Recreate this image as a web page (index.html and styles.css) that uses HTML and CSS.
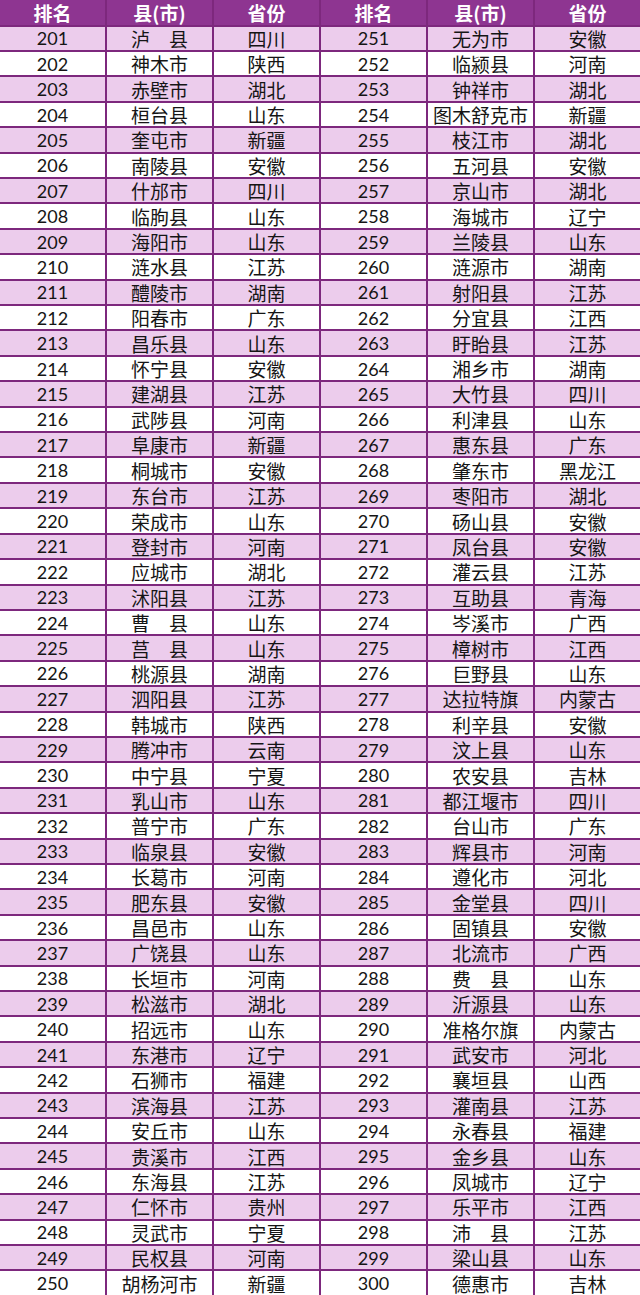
FILE: index.html
```html
<!DOCTYPE html>
<html lang="zh">
<head>
<meta charset="utf-8">
<link rel="stylesheet" href="styles.css">
</head>
<body>
<div class="table">
<div class="row head"><div class="c">排名</div><div class="c">县(市)</div><div class="c">省份</div><div class="c">排名</div><div class="c">县(市)</div><div class="c">省份</div></div>
<div class="row alt"><div class="c n">201</div><div class="c">泸　县</div><div class="c">四川</div><div class="c n">251</div><div class="c">无为市</div><div class="c">安徽</div></div>
<div class="row"><div class="c n">202</div><div class="c">神木市</div><div class="c">陕西</div><div class="c n">252</div><div class="c">临颍县</div><div class="c">河南</div></div>
<div class="row alt"><div class="c n">203</div><div class="c">赤壁市</div><div class="c">湖北</div><div class="c n">253</div><div class="c">钟祥市</div><div class="c">湖北</div></div>
<div class="row"><div class="c n">204</div><div class="c">桓台县</div><div class="c">山东</div><div class="c n">254</div><div class="c">图木舒克市</div><div class="c">新疆</div></div>
<div class="row alt"><div class="c n">205</div><div class="c">奎屯市</div><div class="c">新疆</div><div class="c n">255</div><div class="c">枝江市</div><div class="c">湖北</div></div>
<div class="row"><div class="c n">206</div><div class="c">南陵县</div><div class="c">安徽</div><div class="c n">256</div><div class="c">五河县</div><div class="c">安徽</div></div>
<div class="row alt"><div class="c n">207</div><div class="c">什邡市</div><div class="c">四川</div><div class="c n">257</div><div class="c">京山市</div><div class="c">湖北</div></div>
<div class="row"><div class="c n">208</div><div class="c">临朐县</div><div class="c">山东</div><div class="c n">258</div><div class="c">海城市</div><div class="c">辽宁</div></div>
<div class="row alt"><div class="c n">209</div><div class="c">海阳市</div><div class="c">山东</div><div class="c n">259</div><div class="c">兰陵县</div><div class="c">山东</div></div>
<div class="row"><div class="c n">210</div><div class="c">涟水县</div><div class="c">江苏</div><div class="c n">260</div><div class="c">涟源市</div><div class="c">湖南</div></div>
<div class="row alt"><div class="c n">211</div><div class="c">醴陵市</div><div class="c">湖南</div><div class="c n">261</div><div class="c">射阳县</div><div class="c">江苏</div></div>
<div class="row"><div class="c n">212</div><div class="c">阳春市</div><div class="c">广东</div><div class="c n">262</div><div class="c">分宜县</div><div class="c">江西</div></div>
<div class="row alt"><div class="c n">213</div><div class="c">昌乐县</div><div class="c">山东</div><div class="c n">263</div><div class="c">盱眙县</div><div class="c">江苏</div></div>
<div class="row"><div class="c n">214</div><div class="c">怀宁县</div><div class="c">安徽</div><div class="c n">264</div><div class="c">湘乡市</div><div class="c">湖南</div></div>
<div class="row alt"><div class="c n">215</div><div class="c">建湖县</div><div class="c">江苏</div><div class="c n">265</div><div class="c">大竹县</div><div class="c">四川</div></div>
<div class="row"><div class="c n">216</div><div class="c">武陟县</div><div class="c">河南</div><div class="c n">266</div><div class="c">利津县</div><div class="c">山东</div></div>
<div class="row alt"><div class="c n">217</div><div class="c">阜康市</div><div class="c">新疆</div><div class="c n">267</div><div class="c">惠东县</div><div class="c">广东</div></div>
<div class="row"><div class="c n">218</div><div class="c">桐城市</div><div class="c">安徽</div><div class="c n">268</div><div class="c">肇东市</div><div class="c">黑龙江</div></div>
<div class="row alt"><div class="c n">219</div><div class="c">东台市</div><div class="c">江苏</div><div class="c n">269</div><div class="c">枣阳市</div><div class="c">湖北</div></div>
<div class="row"><div class="c n">220</div><div class="c">荣成市</div><div class="c">山东</div><div class="c n">270</div><div class="c">砀山县</div><div class="c">安徽</div></div>
<div class="row alt"><div class="c n">221</div><div class="c">登封市</div><div class="c">河南</div><div class="c n">271</div><div class="c">凤台县</div><div class="c">安徽</div></div>
<div class="row"><div class="c n">222</div><div class="c">应城市</div><div class="c">湖北</div><div class="c n">272</div><div class="c">灌云县</div><div class="c">江苏</div></div>
<div class="row alt"><div class="c n">223</div><div class="c">沭阳县</div><div class="c">江苏</div><div class="c n">273</div><div class="c">互助县</div><div class="c">青海</div></div>
<div class="row"><div class="c n">224</div><div class="c">曹　县</div><div class="c">山东</div><div class="c n">274</div><div class="c">岑溪市</div><div class="c">广西</div></div>
<div class="row alt"><div class="c n">225</div><div class="c">莒　县</div><div class="c">山东</div><div class="c n">275</div><div class="c">樟树市</div><div class="c">江西</div></div>
<div class="row"><div class="c n">226</div><div class="c">桃源县</div><div class="c">湖南</div><div class="c n">276</div><div class="c">巨野县</div><div class="c">山东</div></div>
<div class="row alt"><div class="c n">227</div><div class="c">泗阳县</div><div class="c">江苏</div><div class="c n">277</div><div class="c">达拉特旗</div><div class="c">内蒙古</div></div>
<div class="row"><div class="c n">228</div><div class="c">韩城市</div><div class="c">陕西</div><div class="c n">278</div><div class="c">利辛县</div><div class="c">安徽</div></div>
<div class="row alt"><div class="c n">229</div><div class="c">腾冲市</div><div class="c">云南</div><div class="c n">279</div><div class="c">汶上县</div><div class="c">山东</div></div>
<div class="row"><div class="c n">230</div><div class="c">中宁县</div><div class="c">宁夏</div><div class="c n">280</div><div class="c">农安县</div><div class="c">吉林</div></div>
<div class="row alt"><div class="c n">231</div><div class="c">乳山市</div><div class="c">山东</div><div class="c n">281</div><div class="c">都江堰市</div><div class="c">四川</div></div>
<div class="row"><div class="c n">232</div><div class="c">普宁市</div><div class="c">广东</div><div class="c n">282</div><div class="c">台山市</div><div class="c">广东</div></div>
<div class="row alt"><div class="c n">233</div><div class="c">临泉县</div><div class="c">安徽</div><div class="c n">283</div><div class="c">辉县市</div><div class="c">河南</div></div>
<div class="row"><div class="c n">234</div><div class="c">长葛市</div><div class="c">河南</div><div class="c n">284</div><div class="c">遵化市</div><div class="c">河北</div></div>
<div class="row alt"><div class="c n">235</div><div class="c">肥东县</div><div class="c">安徽</div><div class="c n">285</div><div class="c">金堂县</div><div class="c">四川</div></div>
<div class="row"><div class="c n">236</div><div class="c">昌邑市</div><div class="c">山东</div><div class="c n">286</div><div class="c">固镇县</div><div class="c">安徽</div></div>
<div class="row alt"><div class="c n">237</div><div class="c">广饶县</div><div class="c">山东</div><div class="c n">287</div><div class="c">北流市</div><div class="c">广西</div></div>
<div class="row"><div class="c n">238</div><div class="c">长垣市</div><div class="c">河南</div><div class="c n">288</div><div class="c">费　县</div><div class="c">山东</div></div>
<div class="row alt"><div class="c n">239</div><div class="c">松滋市</div><div class="c">湖北</div><div class="c n">289</div><div class="c">沂源县</div><div class="c">山东</div></div>
<div class="row"><div class="c n">240</div><div class="c">招远市</div><div class="c">山东</div><div class="c n">290</div><div class="c">准格尔旗</div><div class="c">内蒙古</div></div>
<div class="row alt"><div class="c n">241</div><div class="c">东港市</div><div class="c">辽宁</div><div class="c n">291</div><div class="c">武安市</div><div class="c">河北</div></div>
<div class="row"><div class="c n">242</div><div class="c">石狮市</div><div class="c">福建</div><div class="c n">292</div><div class="c">襄垣县</div><div class="c">山西</div></div>
<div class="row alt"><div class="c n">243</div><div class="c">滨海县</div><div class="c">江苏</div><div class="c n">293</div><div class="c">灌南县</div><div class="c">江苏</div></div>
<div class="row"><div class="c n">244</div><div class="c">安丘市</div><div class="c">山东</div><div class="c n">294</div><div class="c">永春县</div><div class="c">福建</div></div>
<div class="row alt"><div class="c n">245</div><div class="c">贵溪市</div><div class="c">江西</div><div class="c n">295</div><div class="c">金乡县</div><div class="c">山东</div></div>
<div class="row"><div class="c n">246</div><div class="c">东海县</div><div class="c">江苏</div><div class="c n">296</div><div class="c">凤城市</div><div class="c">辽宁</div></div>
<div class="row alt"><div class="c n">247</div><div class="c">仁怀市</div><div class="c">贵州</div><div class="c n">297</div><div class="c">乐平市</div><div class="c">江西</div></div>
<div class="row"><div class="c n">248</div><div class="c">灵武市</div><div class="c">宁夏</div><div class="c n">298</div><div class="c">沛　县</div><div class="c">江苏</div></div>
<div class="row alt"><div class="c n">249</div><div class="c">民权县</div><div class="c">河南</div><div class="c n">299</div><div class="c">梁山县</div><div class="c">山东</div></div>
<div class="row"><div class="c n">250</div><div class="c">胡杨河市</div><div class="c">新疆</div><div class="c n">300</div><div class="c">德惠市</div><div class="c">吉林</div></div>
</div>
</body>
</html>
```
FILE: styles.css
```css
html, body {
  margin: 0;
  padding: 0;
  background: #ffffff;
}

.table {
  width: 640px;
  height: 1295px;
  display: flex;
  flex-direction: column;
  gap: 2px;
  background: #7d287d;
  font-family: "Noto Sans CJK SC", sans-serif;
  color: #151515;
}

.row {
  flex: 1 1 0;
  display: grid;
  grid-template-columns: repeat(6, 1fr);
  column-gap: 2px;
  min-height: 0;
}

.c {
  display: flex;
  align-items: center;
  justify-content: center;
  background: #ffffff;
  font-size: 19px;
  line-height: 1;
  white-space: nowrap;
}

.row.alt .c {
  background: #ecccec;
}

.c.n {
  font-family: Lato, "Noto Sans CJK SC", sans-serif;
  font-size: 18px;
}

.row.head {
  flex-grow: 1.05;
}

.row.head .c {
  background: #8e3591;
  color: #ffffff;
  font-weight: bold;
  font-size: 19px;
}
```
